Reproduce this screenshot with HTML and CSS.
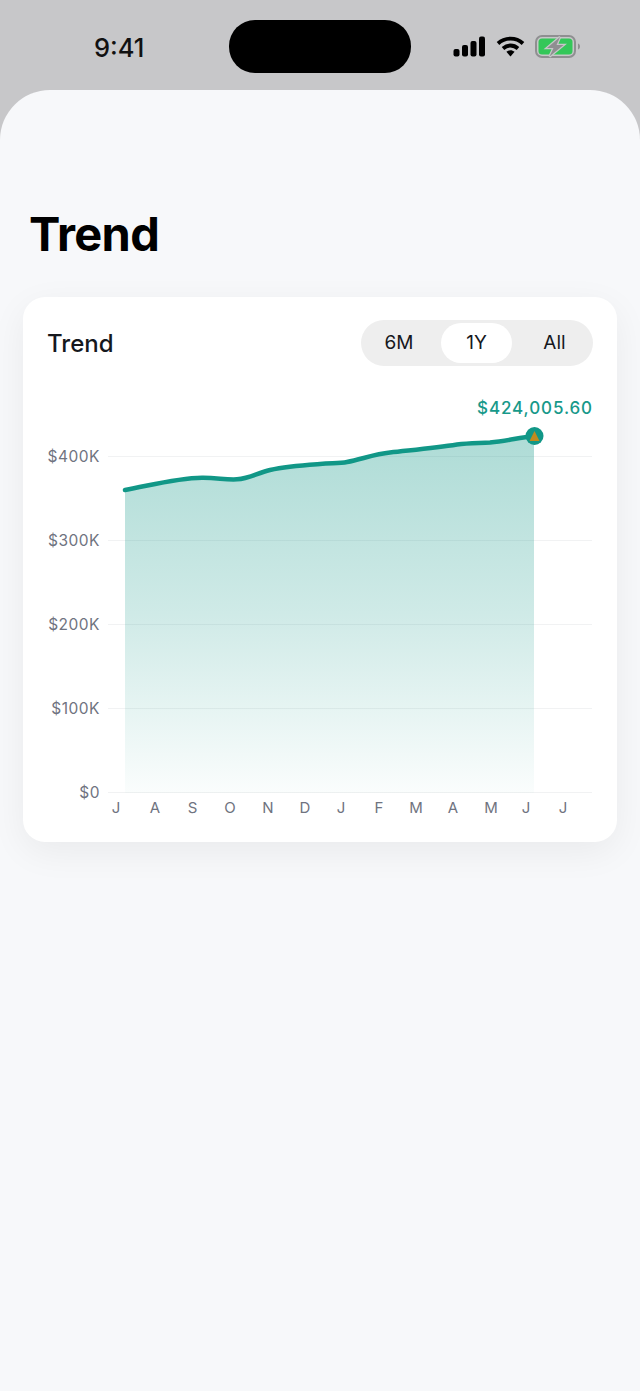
FILE: index.html
```html
<!DOCTYPE html>
<html lang="en">
<head>
  <meta charset="UTF-8" />
  <meta name="viewport" content="width=device-width, initial-scale=1.0"/>
  <title>Trend</title>
  <link rel="stylesheet" href="styles.css">
</head>
<body>

  <div class="status-bar">
    <div class="time">9:41</div>
    <div class="island"></div>
    <div class="status-icons">
      <svg class="signal" width="33" height="21" viewBox="0 0 33 21">
        <rect x="0.5" y="13" width="6" height="7.500" rx="2" />
        <rect x="9" y="9" width="6" height="11.500" rx="2" />
        <rect x="17.5" y="5" width="6" height="15.500" rx="2" />
        <rect x="26" y="0.5" width="6" height="20" rx="2" />
      </svg>
      <svg class="wifi" width="29" height="21" viewBox="0 0 29 21">
        <path d="M2 7.5 C9 1 20 1 27 7.5" />
        <path d="M7 12.5 C11.5 8.5 17.5 8.5 22 12.5" />
        <path class="wifi-dot" d="M10.4 15.8 C13 13.6 16 13.6 18.6 15.8 L14.5 20.5 Z" />
      </svg>
      <svg class="battery" width="47" height="23" viewBox="0 0 47 23">
        <rect class="battery-shell" x="1" y="1" width="39" height="21" rx="6" />
        <rect class="battery-fill" x="3.5" y="3.5" width="34" height="16" rx="3.5" />
        <path class="battery-bolt" d="M25 2 L12 13 H18.5 L14.5 21.5 L28.5 10 H21.5 Z" />
        <path class="battery-cap" d="M43 8.5 C44.5 9 45 10.2 45 11.5 C45 12.8 44.5 14 43 14.5 Z" />
      </svg>
    </div>
  </div>

  <div class="sheet">
    <h1>Trend</h1>

    <div class="card">
      <div class="card-header">
        <h2>Trend</h2>
        <div class="range-toggle">
          <div class="range-item">6M</div>
          <div class="range-item active">1Y</div>
          <div class="range-item">All</div>
        </div>
      </div>

      <svg class="chart" width="546" height="430" viewBox="0 0 546 430">
        <defs>
          <linearGradient id="areaFade" x1="0" y1="0" x2="0" y2="1">
            <stop offset="0" stop-color="#119787" stop-opacity="0.34" />
            <stop offset="0.5" stop-color="#119787" stop-opacity="0.2" />
            <stop offset="1" stop-color="#119787" stop-opacity="0.02" />
          </linearGradient>
        </defs>

        <text class="value-label" x="546" y="24" text-anchor="end">$424,005.60</text>

        <line class="grid-line" x1="61" y1="66.5" x2="545" y2="66.5" />
        <line class="grid-line" x1="61" y1="150.5" x2="545" y2="150.5" />
        <line class="grid-line" x1="61" y1="234.5" x2="545" y2="234.5" />
        <line class="grid-line" x1="61" y1="318.5" x2="545" y2="318.5" />
        <line class="grid-line" x1="61" y1="402.5" x2="545" y2="402.5" />

        <text class="y-label" x="53" y="71.5" text-anchor="end">$400K</text>
        <text class="y-label" x="53" y="155.5" text-anchor="end">$300K</text>
        <text class="y-label" x="53" y="239.5" text-anchor="end">$200K</text>
        <text class="y-label" x="53" y="323.5" text-anchor="end">$100K</text>
        <text class="y-label" x="53" y="407.5" text-anchor="end">$0</text>

        <path class="area" fill="url(#areaFade)" d="M78 100 C105 95 130 88 155 87.7 C170 87.5 178 90 190 89.3 C203 88.5 210 83 223 80 C240 76 258 75 273 74 C285 73 293 73.5 300 72 C315 69 328 64 343 62.5 C365 60 388 58 410 54.5 C422 53 432 53.2 443 52.5 C460 51 470 48 487 46 V403 H78 Z" />
        <path class="trend-line" d="M78 100 C105 95 130 88 155 87.7 C170 87.5 178 90 190 89.3 C203 88.5 210 83 223 80 C240 76 258 75 273 74 C285 73 293 73.5 300 72 C315 69 328 64 343 62.5 C365 60 388 58 410 54.5 C422 53 432 53.2 443 52.5 C460 51 470 48 487 46" />

        <circle class="end-dot" cx="487.5" cy="46" r="9" />
        <path class="end-mark" d="M487.5 41 L492.5 51 H482.5 Z" />

        <text class="x-label" x="69" y="423" text-anchor="middle">J</text>
        <text class="x-label" x="108" y="423" text-anchor="middle">A</text>
        <text class="x-label" x="145.500" y="423" text-anchor="middle">S</text>
        <text class="x-label" x="183" y="423" text-anchor="middle">O</text>
        <text class="x-label" x="221" y="423" text-anchor="middle">N</text>
        <text class="x-label" x="258" y="423" text-anchor="middle">D</text>
        <text class="x-label" x="294" y="423" text-anchor="middle">J</text>
        <text class="x-label" x="332" y="423" text-anchor="middle">F</text>
        <text class="x-label" x="369" y="423" text-anchor="middle">M</text>
        <text class="x-label" x="406" y="423" text-anchor="middle">A</text>
        <text class="x-label" x="444" y="423" text-anchor="middle">M</text>
        <text class="x-label" x="479" y="423" text-anchor="middle">J</text>
        <text class="x-label" x="516" y="423" text-anchor="middle">J</text>
      </svg>
    </div>
  </div>

</body>
</html>
```

FILE: styles.css
```css
* {
  box-sizing: border-box;
  margin: 0;
  padding: 0;
}

body {
  font-family: Inter, 'Liberation Sans', sans-serif;
  background-color: #c7c7c9;
  color: #000;
  height: 1391px;
  overflow: hidden;
}

.status-bar {
  display: grid;
  grid-template-columns: 229px 182px 229px;
  height: 90px;
  padding-top: 20px;
}

.time {
  height: 53px;
  line-height: 55px;
  padding-left: 94px;
  font-size: 25.5px;
  font-weight: 550;
  color: #111;
}

.island {
  height: 53px;
  background-color: #000;
  border-radius: 26px;
}

.status-icons {
  display: flex;
  align-items: center;
  height: 53px;
  padding-left: 42px;
  gap: 10px;
}

.signal {
  fill: #000;
}

.wifi {
  fill: none;
  stroke: #000;
  stroke-width: 3.800;
}

.wifi-dot {
  fill: #000;
  stroke: none;
}

.battery-shell {
  fill: none;
  stroke: #8f8f91;
  stroke-width: 2;
}

.battery-fill {
  fill: #34c759;
}

.battery-bolt {
  fill: #8f8f91;
  stroke: #c7c7c9;
  stroke-width: 2.500;
  paint-order: stroke;
}

.battery-cap {
  fill: #8f8f91;
}

.sheet {
  height: 1301px;
  padding: 115px 23px 0;
  background-color: #f7f8fa;
  border-radius: 50px 50px 0 0;
}

h1 {
  height: 92px;
  padding-left: 6px;
  font-size: 47px;
  font-weight: 700;
  line-height: 57px;
  letter-spacing: -0.7px;
}

.card {
  height: 545px;
  padding: 23px 24px 0;
  background-color: #ffffff;
  border-radius: 22px;
  box-shadow: 0 10px 36px rgba(0, 0, 0, 0.06);
}

.card-header {
  display: flex;
  align-items: center;
  justify-content: space-between;
  height: 46px;
  margin-bottom: 24px;
}

h2 {
  font-size: 24px;
  font-weight: 500;
  color: #16181d;
}

.range-toggle {
  display: flex;
  align-items: center;
  width: 232px;
  height: 46px;
  padding: 3px 0;
  background-color: #eeeeee;
  border-radius: 23px;
}

.range-item {
  height: 40px;
  line-height: 40px;
  text-align: center;
  font-size: 19px;
  font-weight: 400;
  color: #16181d;
  border-radius: 20px;
}

.range-item:nth-child(1) {
  width: 80px;
  padding-right: 4px;
}

.range-item:nth-child(2) {
  width: 71px;
}

.range-item:nth-child(3) {
  width: 81px;
  padding-left: 4px;
}

.range-item.active {
  background-color: #ffffff;
}

.chart {
  display: block;
}

.value-label {
  font-size: 17px;
  font-weight: 500;
  letter-spacing: 0.9px;
  fill: #17998a;
}

.grid-line {
  stroke: #f1f2f3;
  stroke-width: 1;
}

.y-label {
  font-size: 15.500px;
  letter-spacing: 0.5px;
  fill: #6f7380;
}

.x-label {
  font-size: 15px;
  fill: #6f7380;
}

.trend-line {
  fill: none;
  stroke: #119787;
  stroke-width: 4.500;
  stroke-linecap: round;
}

.end-dot {
  fill: #119787;
}

.end-mark {
  fill: #c08a1e;
}
```
